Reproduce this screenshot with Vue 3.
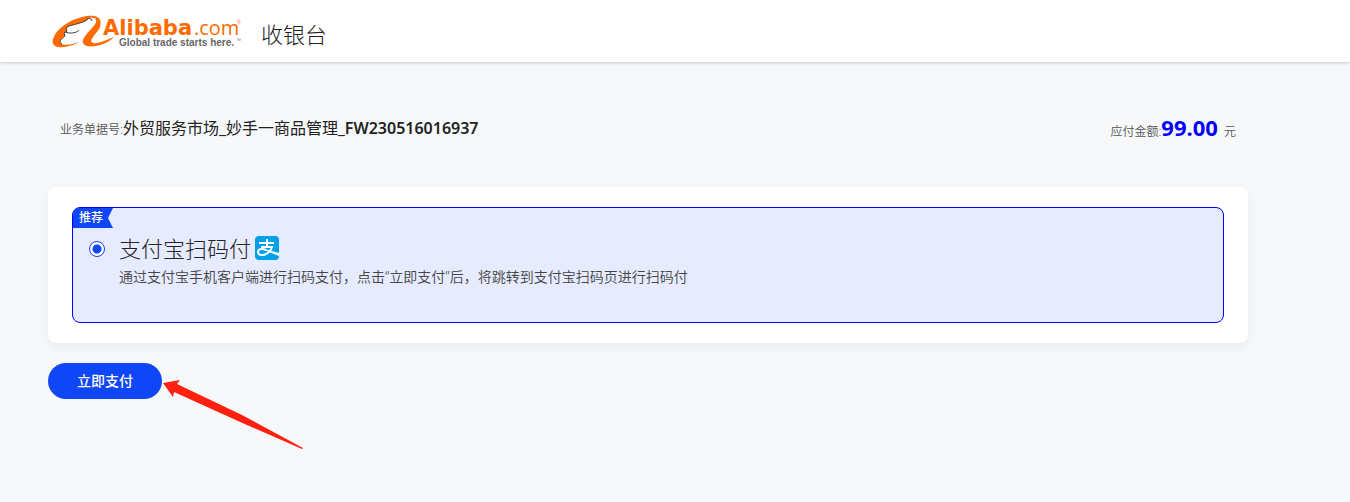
<script setup>
import { ref } from 'vue'

const order = {
  name: '外贸服务市场_妙手一商品管理',
  code: '_FW230516016937',
  amount: '99.00',
}
const methods = [
  {
    id: 'alipay',
    title: '支付宝扫码付',
    description: '通过支付宝手机客户端进行扫码支付，点击“立即支付”后，将跳转到支付宝扫码页进行扫码付',
  },
]
const selected = ref('alipay')
</script>

<template>
  <div class="page">
    <header class="header">
      <a class="logo" href="#" aria-label="Alibaba.com">
        <svg width="192" height="36" viewBox="50 13 192 36">
          <path
            fill="#ff6a00"
            d="M100 20C98 15 90 15 82 17C69 20 56 29 53 39C51 46 57 48 64 47C71 46 76 44 79 42C73 44 66 46 62 44C58 42 61 39 65 36L64 33L67 31L66 28L69 26C76 24 82 23 87 20L88 18C94 17 97 18 96 22C94 28 81 37 83 43C85 48 96 47 103 44C109 42 112 39 114 37C107 40 98 44 93 43C88 41 96 34 99 29C101 25 101 22 100 20Z"
          />
          <path
            fill="none"
            stroke="#444"
            stroke-width="1"
            d="M62 44C58 42 61 39 65 36L64 33L67 31L66 28L69 26C76 24 82 23 87 20L88 18L91 19L92 21M65 32C70 34 77 33 79 30"
          />
          <text class="logo-name" x="103" y="35">Alibaba</text>
          <text class="logo-com" x="194" y="35">.com</text>
          <text class="logo-mark" x="237" y="24">®</text>
          <text class="logo-line" x="119" y="46">Global trade starts here.</text>
          <text class="logo-mark dark" x="236" y="42">™</text>
        </svg>
      </a>
      <h1 class="heading">收银台</h1>
    </header>

    <main class="content">
      <section class="order">
        <div>
          <span class="label">业务单据号:</span><span class="order-name">{{ order.name }}<strong class="code">{{ order.code }}</strong></span>
        </div>
        <div class="label">应付金额:<strong class="amount">{{ order.amount }}</strong> 元</div>
      </section>

      <section class="card">
        <label v-for="m in methods" :key="m.id" class="method" :for="m.id">
          <span class="ribbon">推荐</span>
          <input :id="m.id" v-model="selected" class="radio" type="radio" name="method" :value="m.id" />
          <span class="details">
            <span class="title">
              {{ m.title }}
              <svg class="alipay" width="24" height="24" viewBox="0 0 24 24" aria-hidden="true">
                <rect width="24" height="24" rx="4" fill="#00a0e9" />
                <path
                  fill="none"
                  stroke="#fff"
                  stroke-width="2"
                  d="M4 7H19M12 3V11M6 11H17C16 14 14 17 11 18C7 20 3 19 3 16C3 13 7 12 11 14"
                />
                <path fill="#fff" d="M10 13C14 14 19 16 24 17V20C19 18 14 16 9 14Z" />
              </svg>
            </span>
            <span class="description">{{ m.description }}</span>
          </span>
        </label>
      </section>

      <div class="actions">
        <button class="pay" type="button">立即支付</button>
        <svg class="arrow" width="142" height="72" viewBox="0 0 142 72" aria-hidden="true">
          <path fill="#ff2010" d="M1 4L18 1L15 5L80 36L141 69L140 70L76 42L12 13L11 18Z" />
        </svg>
      </div>
    </main>
  </div>
</template>

<style>
body {
  background: #f7f8fa;
}
</style>

<style scoped>
.page {
  min-height: 100vh;
  font-family: "Noto Sans", "Noto Sans CJK SC", sans-serif;
  color: #222;
}
.header {
  display: flex;
  align-items: center;
  gap: 19px;
  height: 62px;
  padding-left: 50px;
  background: #fff;
  box-shadow: 0 1px 3px rgba(0, 0, 0, 0.2);
}
.logo {
  display: flex;
}
.logo-name {
  font: bold 21px "DejaVu Sans", sans-serif;
  fill: #ff6a00;
}
.logo-com {
  font: 20px "Open Sans", sans-serif;
  fill: #ff6a00;
}
.logo-line {
  font: bold 10px "Liberation Sans", sans-serif;
  fill: #666;
}
.logo-mark {
  font: 5px "Liberation Sans", sans-serif;
  fill: #ff6a00;
}
.dark {
  fill: #666;
}
.heading {
  margin: 6px 0 0;
  font-size: 22px;
  font-weight: 300;
  line-height: 32px;
}
.content {
  max-width: 1200px;
  margin: 0 48px;
}
.order {
  display: flex;
  justify-content: space-between;
  align-items: center;
  height: 32px;
  padding: 49px 12px 44px;
}
.label {
  font-size: 12px;
  font-weight: 350;
  color: #555;
}
.order-name {
  font-size: 16px;
  font-weight: 400;
}
.code {
  font-weight: 600;
}
.amount {
  margin-right: 3px;
  font-size: 22px;
  font-weight: 700;
  color: #00f;
}
.card {
  padding: 20px 24px;
  border-radius: 8px;
  background: #fff;
  box-shadow: 0 4px 12px rgba(0, 0, 0, 0.05);
}
.method {
  position: relative;
  display: flex;
  gap: 14px;
  box-sizing: border-box;
  min-height: 116px;
  padding: 24px 16px;
  border: 1px solid #00f;
  border-radius: 8px;
  background: #e6ebff;
}
.ribbon {
  position: absolute;
  top: 0;
  left: 0;
  width: 34px;
  padding-left: 6px;
  border-top-left-radius: 6px;
  background: #0f46f5;
  clip-path: polygon(0 0, 100% 0, 35px 50%, 100% 100%, 0 100%);
  color: #fff;
  font-size: 12px;
  font-weight: 500;
  line-height: 20px;
}
.radio {
  appearance: none;
  flex: none;
  width: 16px;
  height: 16px;
  margin: 9px 0 0;
  border: 1px solid #0f46f5;
  border-radius: 50%;
  background: #fff;
}
.radio:checked {
  background: radial-gradient(circle, #0f46f5 4px, #fff 5px);
}
.details {
  display: flex;
  flex-direction: column;
}
.title {
  display: flex;
  align-items: center;
  gap: 4px;
  font-size: 22px;
  font-weight: 300;
  line-height: 32px;
}
.description {
  font-size: 14px;
  font-weight: 350;
  line-height: 26px;
  color: #444;
}
.actions {
  position: relative;
  margin-top: 20px;
}
.pay {
  width: 114px;
  height: 36px;
  padding: 0 0 2px;
  border: 0;
  border-radius: 18px;
  background: #0f46f5;
  color: #fff;
  font: 500 14px "Noto Sans", "Noto Sans CJK SC", sans-serif;
}
.arrow {
  position: absolute;
  top: 16px;
  left: 114px;
}
</style>
